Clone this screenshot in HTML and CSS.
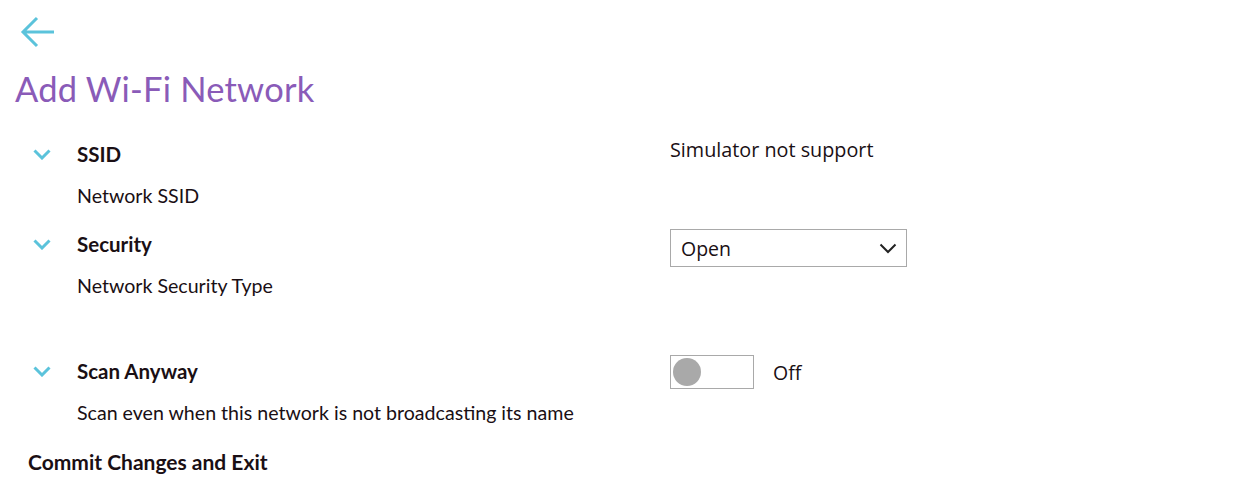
FILE: index.html
```html
<!DOCTYPE html>
<html>
<head>
<meta charset="utf-8">
<link rel="stylesheet" href="styles.css">
</head>
<body>
<div class="page">
  <div class="back">
    <svg width="36" height="32" viewBox="0 0 36 32"><path d="M34 16 H3 M17 2 L3 16 L17 30" fill="none" stroke="#5bc3db" stroke-width="3"/></svg>
  </div>
  <h1 class="title">Add Wi-Fi Network</h1>

  <div class="setting s1">
    <div class="left">
      <div class="head"><span class="chev"><svg width="18" height="11" viewBox="0 0 18 11"><path d="M1.5 1.5 L9 9 L16.5 1.5" fill="none" stroke="#5bc3db" stroke-width="3"/></svg></span><span class="label">SSID</span></div>
      <div class="desc">Network SSID</div>
    </div>
    <div class="right"><div class="plain">Simulator not support</div></div>
  </div>

  <div class="setting s2">
    <div class="left">
      <div class="head"><span class="chev"><svg width="18" height="11" viewBox="0 0 18 11"><path d="M1.5 1.5 L9 9 L16.5 1.5" fill="none" stroke="#5bc3db" stroke-width="3"/></svg></span><span class="label">Security</span></div>
      <div class="desc">Network Security Type</div>
    </div>
    <div class="right">
      <div class="select"><span>Open</span><svg width="18" height="11" viewBox="0 0 18 11"><path d="M1.5 1.5 L9 9 L16.5 1.5" fill="none" stroke="#222" stroke-width="2"/></svg></div>
    </div>
  </div>

  <div class="setting s3">
    <div class="left">
      <div class="head"><span class="chev"><svg width="18" height="11" viewBox="0 0 18 11"><path d="M1.5 1.5 L9 9 L16.5 1.5" fill="none" stroke="#5bc3db" stroke-width="3"/></svg></span><span class="label">Scan Anyway</span></div>
      <div class="desc">Scan even when this network is not broadcasting its name</div>
    </div>
    <div class="right toggle-row">
      <div class="toggle"><span class="knob"></span></div>
      <span class="state">Off</span>
    </div>
  </div>

  <div class="commit">Commit Changes and Exit</div>
</div>
</body>
</html>
```
FILE: styles.css
```css
* { box-sizing: border-box; }
html, body { margin: 0; padding: 0; background: #fff; }
body { font-family: Lato, "Open Sans", sans-serif; color: #1a0f14; }
.page { padding: 16px 0 0 15px; width: 1256px; height: 503px; overflow: hidden; }
.back { margin-left: 5px; height: 34px; }
.back svg { display: block; }
.title { margin: 19px 0 0 0; font-weight: 400; font-size: 34.5px; line-height: 40px; color: #8a5bb8; letter-spacing: 0.2px; }
.setting { display: flex; }
.left { width: 655px; }
.head { display: flex; align-items: center; height: 30px; }
.chev { width: 62px; padding-left: 18px; display: flex; }
.chev svg { display: block; }
.label { font-size: 20.5px; font-weight: 700; }
.desc { margin-left: 62px; font-size: 19.6px; line-height: 24px; margin-top: 15px; }
.s1 { margin-top: 30px; }
.s2 { margin-top: 21px; }
.s3 { margin-top: 58px; }
.right { font-family: "Open Sans", "Noto Sans", sans-serif; }
.plain { font-size: 19.8px; line-height: 26px; margin-top: -2px; }
.select { width: 237px; height: 38px; border: 1px solid #a9a9a9; display: flex; align-items: center; justify-content: space-between; padding: 0 9px 0 10px; font-size: 19.5px; margin-top: 0; }
.toggle-row { display: flex; align-items: center; height: 34px; margin-top: -1px; }
.toggle { width: 84px; height: 34px; border: 1px solid #a9a9a9; padding: 2px; display: flex; align-items: center; }
.knob { width: 28px; height: 28px; border-radius: 50%; background: #a9a9a9; }
.state { margin-left: 19px; font-size: 19.5px; }
.commit { margin-top: 24px; margin-left: 13px; font-size: 21px; font-weight: 700; }
```
